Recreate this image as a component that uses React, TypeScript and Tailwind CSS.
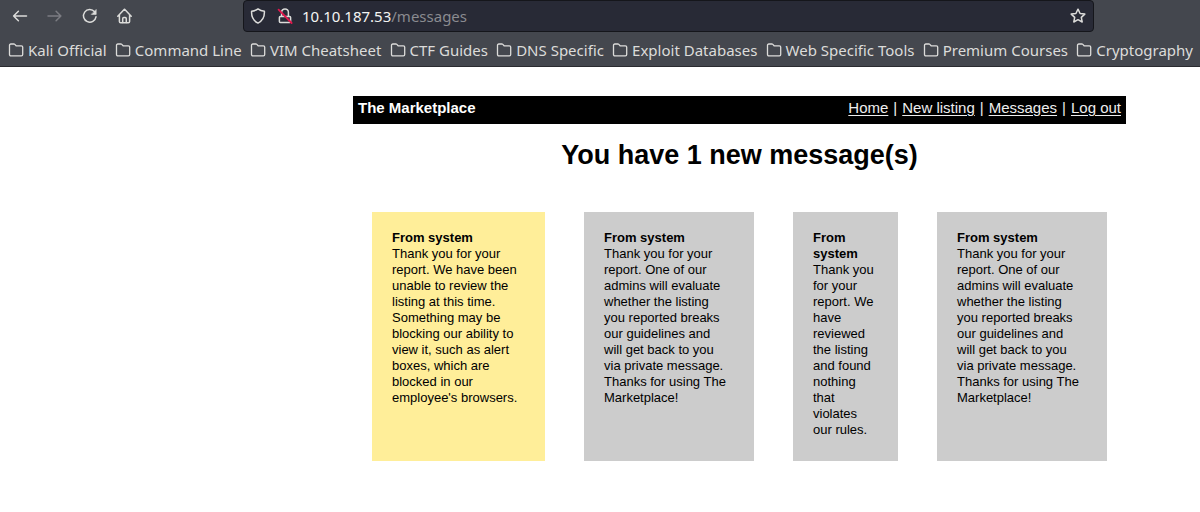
import React from 'react';

const bookmarks = [
  'Kali Official',
  'Command Line',
  'VIM Cheatsheet',
  'CTF Guides',
  'DNS Specific',
  'Exploit Databases',
  'Web Specific Tools',
  'Premium Courses',
  'Cryptography',
];

const evaluating =
  'Thank you for your report. One of our admins will evaluate whether the listing you reported breaks our guidelines and will get back to you via private message. Thanks for using The Marketplace!';

const messages = [
  {
    unread: true,
    body: "Thank you for your report. We have been unable to review the listing at this time. Something may be blocking our ability to view it, such as alert boxes, which are blocked in our employee's browsers.",
  },
  { unread: false, body: evaluating },
  {
    unread: false,
    body: 'Thank you for your report. We have reviewed the listing and found nothing that violates our rules.',
  },
  { unread: false, body: evaluating },
];

const links = ['Home', 'New listing', 'Messages', 'Log out'];

function Icon({ children }: { children: React.ReactNode }) {
  return (
    <svg
      viewBox="0 0 16 16"
      className="size-4 shrink-0"
      fill="none"
      stroke="currentColor"
      strokeWidth="1.5"
      strokeLinecap="round"
      strokeLinejoin="round"
      aria-hidden="true"
    >
      {children}
    </svg>
  );
}

function Toolbar() {
  return (
    <div className="flex h-8 items-center">
      <div className="flex w-[243px] shrink-0 items-center gap-[19px] pl-3">
        <button type="button" aria-label="Back">
          <Icon>
            <path d="M14.5 8H1.600M6.400 3.200 1.600 8l4.800 4.800" />
          </Icon>
        </button>
        <button type="button" aria-label="Forward" disabled className="text-[#7b7c82]">
          <Icon>
            <path d="M1 8h12.900M9.100 3.200 13.900 8l-4.800 4.800" />
          </Icon>
        </button>
        <button type="button" aria-label="Reload">
          <Icon>
            <path d="M12.600 3.800A6.300 6.300 0 1 0 14 8.800" />
            <path d="M14.200 1.800v4.600H9.600z" fill="currentColor" strokeWidth="0.6" />
          </Icon>
        </button>
        <button type="button" aria-label="Home">
          <Icon>
            <path d="M.8 8.200 7.400 1.300h.2L14.200 8.200M2.400 7v6.400c0 .8.500 1.300 1.300 1.300h7.600c.8 0 1.300-.5 1.300-1.300V7" />
            <path d="M5.700 14.500v-3.700c0-.7.500-1.200 1.100-1.200h1.400c.6 0 1.100.5 1.100 1.200v3.700" />
          </Icon>
        </button>
      </div>
      <div className="mr-[106px] flex h-8 min-w-0 grow items-center rounded-sm border border-[#15161b] bg-[#282a36] pr-[7px] pl-[6px]">
        <button type="button" aria-label="Tracking protection">
          <Icon>
            <path d="M8 .9c1.800 1.400 3.900 2.100 6.400 2.300.3 5.100-1.600 9.600-6.400 11.900C3.200 12.800 1.300 8.300 1.600 3.200 4.100 3 6.200 2.300 8 .9z" />
          </Icon>
        </button>
        <button type="button" aria-label="Connection is not secure" className="ml-[11px]">
          <Icon>
            <path d="M4.600 8.200V4.300a3.400 3.400 0 0 1 6.800 0v3.900" />
            <rect x="2.400" y="8.500" width="11.200" height="6" rx="1" />
            <path d="M1.600 1.600 14.600 15" stroke="#e2164c" strokeWidth="1.800" />
          </Icon>
        </button>
        <label htmlFor="path" className="ml-[9px] text-[15px] text-[#f4f4f2]">
          10.10.187.53
        </label>
        <input
          id="path"
          type="text"
          defaultValue="/messages"
          className="min-w-0 grow bg-transparent text-[15px] text-[#8a8b90] outline-none"
        />
        <button type="button" aria-label="Bookmark this page">
          <Icon>
            <path d="M8 1.200 10.100 5.500l4.700.6-3.500 3.300.9 4.600L8 11.700 3.800 14l.9-4.600L1.200 6.100l4.700-.6z" />
          </Icon>
        </button>
      </div>
    </div>
  );
}

function BookmarksBar() {
  return (
    <nav aria-label="Bookmarks" className="flex h-[34px] items-center justify-between pt-[2px] pr-[7px] pl-2 text-[15px]">
      {bookmarks.map((name) => (
        <a key={name} href="#" className="flex items-center gap-1 whitespace-nowrap">
          <Icon>
            <path
              strokeWidth="1.3"
              d="M1.500 12.500V3.300c0-.8.500-1.300 1.300-1.300h3c.4 0 .7.100 1 .4l1.300 1.400h5.300c.8 0 1.300.5 1.300 1.300v7.400c0 .8-.5 1.300-1.300 1.300H2.800c-.8 0-1.300-.5-1.300-1.300z"
            />
          </Icon>
          {name}
        </a>
      ))}
    </nav>
  );
}

export default function App() {
  return (
    <div className="min-h-screen bg-white">
      <header className="border-b border-[#2a2b30] bg-[#44474e] font-['Noto_Sans',sans-serif] text-[#dcdcda]">
        <Toolbar />
        <BookmarksBar />
      </header>
      <main className="mr-[74px] ml-[353px] pt-[29px] pb-12 font-['Liberation_Sans',sans-serif] text-black">
        <div className="flex h-7 justify-between bg-black px-[5px] pt-[3px] text-[15px] leading-[18px] text-[#eeeeee]">
          <strong className="text-white">The Marketplace</strong>
          <nav aria-label="Site" className="flex gap-[5px]">
            {links.map((name, i) => (
              <React.Fragment key={name}>
                {i > 0 && <span>|</span>}
                <a href="#" className="underline underline-offset-2">
                  {name}
                </a>
              </React.Fragment>
            ))}
          </nav>
        </div>
        <h1 className="mt-[14px] text-center text-[27px] leading-[34px] font-bold">You have 1 new message(s)</h1>
        <div className="mx-[19px] mt-10 grid grid-cols-[173fr_170fr_105fr_170fr] gap-[39px] text-[13px] leading-[16px]">
          {messages.map((message, i) => (
            <article
              key={i}
              className={`pt-[18px] pr-[23px] pb-[23px] pl-5 ${message.unread ? 'bg-[#ffee99]' : 'bg-[#cccccc]'}`}
            >
              <h2 className="font-bold">From system</h2>
              <p>{message.body}</p>
            </article>
          ))}
        </div>
      </main>
    </div>
  );
}
